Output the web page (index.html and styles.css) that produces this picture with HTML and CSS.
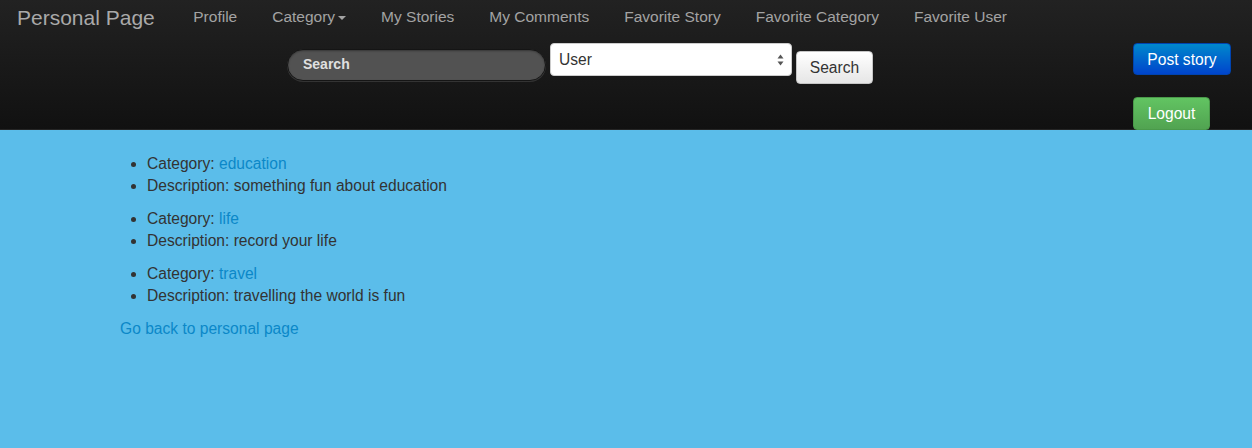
FILE: index.html
```html
<!DOCTYPE html>
<html>
<head>
<meta charset="utf-8">
<title>Personal Page</title>
<link rel="stylesheet" href="styles.css">
</head>
<body>
<header class="navbar">
  <div class="nav-top">
    <a class="brand" href="#">Personal Page</a>
    <ul class="nav">
      <li><a href="#">Profile</a></li>
      <li><a href="#">Category<span class="caret"></span></a></li>
      <li><a href="#">My Stories</a></li>
      <li><a href="#">My Comments</a></li>
      <li><a href="#">Favorite Story</a></li>
      <li><a href="#">Favorite Category</a></li>
      <li><a href="#">Favorite User</a></li>
    </ul>
  </div>
  <div class="nav-bottom">
    <form class="search-form">
      <input class="search-query" type="text" placeholder="Search">
      <div class="select">
        <span>User</span>
        <svg class="select-arrows" width="7" height="12" viewBox="0 0 7 12"><path d="M3.5 0.5 L6.5 4.5 L0.5 4.5 Z" fill="#555"/><path d="M3.5 11.5 L6.5 7.5 L0.5 7.5 Z" fill="#555"/></svg>
      </div>
      <button class="btn btn-default" type="button">Search</button>
    </form>
    <div class="actions">
      <button class="btn btn-primary" type="button">Post story</button>
      <button class="btn btn-success" type="button">Logout</button>
    </div>
  </div>
</header>
<main class="content">
  <ul class="cat-list">
    <li>Category: <a href="#">education</a></li>
    <li>Description: something fun about education</li>
  </ul>
  <ul class="cat-list">
    <li>Category: <a href="#">life</a></li>
    <li>Description: record your life</li>
  </ul>
  <ul class="cat-list">
    <li>Category: <a href="#">travel</a></li>
    <li>Description: travelling the world is fun</li>
  </ul>
  <a class="back" href="#">Go back to personal page</a>
</main>
</body>
</html>
```
FILE: styles.css
```css
* { box-sizing: border-box; }
html, body { margin: 0; padding: 0; }
body {
  background: #5bbdea;
  font-family: "Liberation Sans", Arial, sans-serif;
  font-size: 15.6px;
  line-height: 22px;
  color: #333;
  height: 448px;
  overflow: hidden;
}
a { color: #0b88c8; text-decoration: none; }

.navbar {
  height: 130px;
  background: linear-gradient(to bottom, #222222, #111111);
  border-bottom: 1px solid #252525;
}
.nav-top {
  display: flex;
  align-items: center;
  height: 36px;
  padding-left: 17px;
}
.brand {
  color: #a9a9a9;
  font-size: 21px;
  line-height: 36px;
  margin-right: 21px;
}
.nav {
  display: flex;
  list-style: none;
  margin: 0;
  padding: 0;
}
.nav li a {
  display: block;
  color: #a3a3a3;
  font-size: 15.5px;
  padding: 0 17.5px 2px 17.5px;
  line-height: 32px;
}
.caret {
  display: inline-block;
  width: 0; height: 0;
  margin-left: 3px;
  vertical-align: middle;
  border-top: 4px solid #a3a3a3;
  border-left: 4px solid transparent;
  border-right: 4px solid transparent;
}

.nav-bottom {
  display: flex;
  align-items: flex-start;
  padding-top: 7px;
  padding-left: 287px;
  padding-right: 21px;
}
.search-form {
  display: flex;
  align-items: flex-start;
  gap: 4px;
}
.search-query {
  width: 259px;
  height: 32px;
  margin-top: 6px;
  border-radius: 16px;
  border: 1px solid #151515;
  background: #525252;
  box-shadow: inset 0 1px 2px rgba(0,0,0,0.35), 0 1px 0 rgba(255,255,255,0.12);
  padding: 0 15px 3px 15px;
  font-family: inherit;
  font-size: 14px;
  font-weight: bold;
  color: #eee;
  outline: none;
}
.search-query::placeholder { color: #e0e0e0; opacity: 1; }
.select {
  width: 242px;
  height: 33px;
  background: #fff;
  border: 1px solid #ccc;
  border-radius: 4px;
  display: flex;
  align-items: center;
  justify-content: space-between;
  padding: 0 7px 0 8px;
  font-size: 15.6px;
  color: #333;
}
.select-arrows { margin-top: 1px; }
.btn {
  font-family: inherit;
  font-size: 15.6px;
  line-height: 20px;
  border-radius: 4px;
  cursor: pointer;
  padding: 6px 8px;
}
.btn-default {
  margin-top: 8px;
  height: 33px;
  width: 77px;
  color: #333;
  background: linear-gradient(to bottom, #ffffff, #e6e6e6);
  border: 1px solid #c5c5c5;
  box-shadow: inset 0 1px 0 rgba(255,255,255,0.2), 0 1px 2px rgba(0,0,0,0.05);
}
.actions {
  margin-left: auto;
  display: flex;
  flex-direction: column;
  align-items: flex-start;
  gap: 22px;
}
.btn-primary {
  height: 32px;
  width: 98px;
  color: #fff;
  background: linear-gradient(to bottom, #0088cc, #0044cc);
  border: 1px solid #0044b0;
}
.btn-success {
  height: 33px;
  width: 77px;
  color: #fff;
  background: linear-gradient(to bottom, #62c462, #51a351);
  border: 1px solid #4a9a4a;
}

.content {
  padding: 23px 0 0 120px;
}
.cat-list {
  margin: 0 0 11px 0;
  padding-left: 27px;
}
.back { display: block; }
```
